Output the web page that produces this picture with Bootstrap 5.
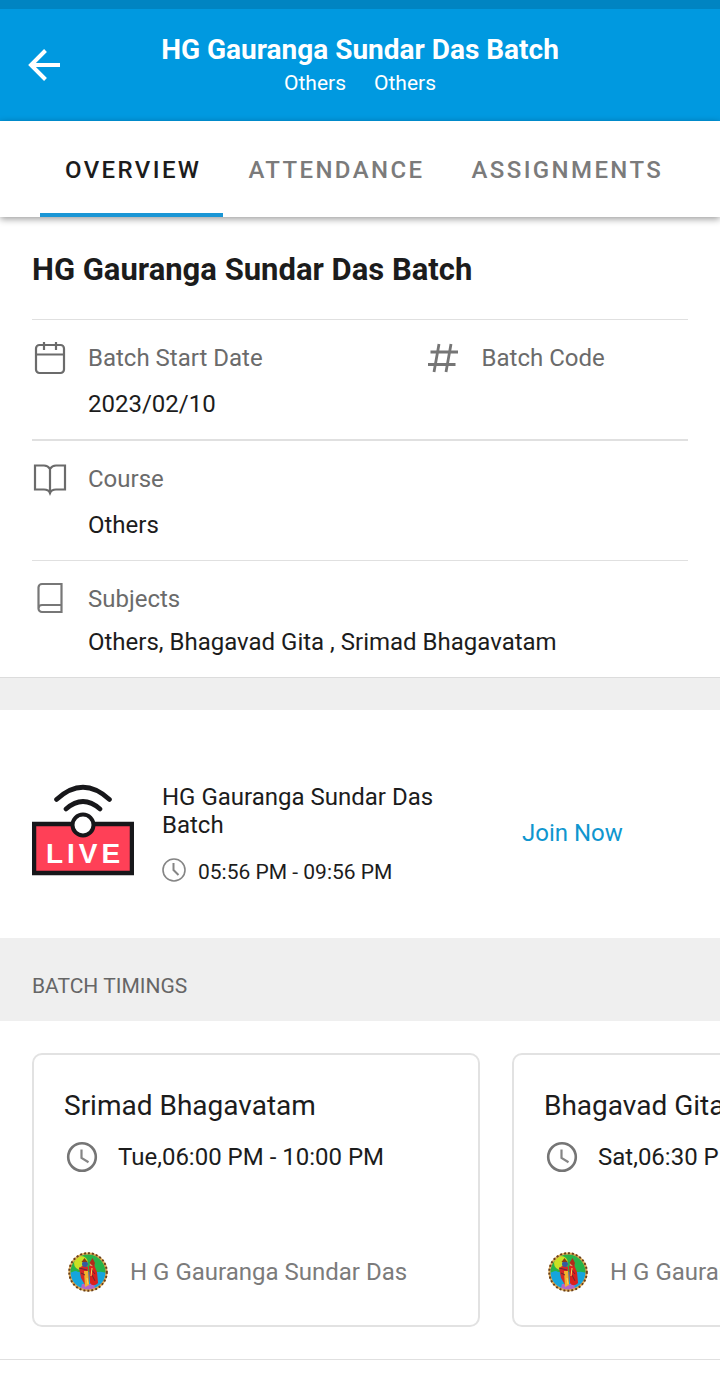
<!DOCTYPE html>
<html lang="en">
<head>
<meta charset="utf-8">
<meta name="viewport" content="width=device-width, initial-scale=1">
<title>HG Gauranga Sundar Das Batch</title>
<link href="https://cdn.jsdelivr.net/npm/bootstrap@5.3.0/dist/css/bootstrap.min.css" rel="stylesheet">
<style>
body { font-family: Roboto, sans-serif; font-size: 24px; line-height: 28px; color: #1c1c1c; background: #fff; }
svg { display: block; flex-shrink: 0; }
.app-header { background: #0099e0; border-top: 9px solid #0084c2; min-height: 121px; color: #fff; }
.back-btn { width: 88px; height: 112px; padding-left: 28px; }
.app-title { font-size: 28px; line-height: 34px; font-weight: 700; }
.app-sub { font-size: 21px; line-height: 32px; gap: 28px; }
.side-space { width: 88px; }
.tab-bar { height: 96px; padding-left: 40px; box-shadow: 0 2px 7px rgba(0,0,0,.4); position: relative; }
.tab-bar .nav-link { padding: 2px 22px 0 25px; height: 96px; line-height: 94px; font-weight: 500; letter-spacing: .1em; color: #7b7b7b; border-radius: 0; }
.tab-bar .nav-link.active { color: #1c1c1c; border-bottom: 4px solid #1a96d5; }
.gutter { padding-left: 32px; padding-right: 32px; }
.batch-name { font-size: 31px; line-height: 36px; font-weight: 700; padding: 35px 0 31px; margin: 0; }
.info-row { border-top: 1px solid #e0e0e0; padding: 24px 0 21px; }
.info-row.strong-line { border-top-width: 2px; }
.info-row dl { margin: 0; }
.info-row dt { font-weight: 400; color: #6b6b6b; margin-bottom: 18px; gap: 20px; height: 28px; }
.info-row dd { margin: 0; padding-left: 56px; min-height: 28px; }
.info-row.snug dt { margin-bottom: 15px; }
.first-col { width: 60%; }
.band { background: #efefef; }
.band-line { border-top: 1px solid #dcdcdc; height: 33px; }
.live-block { padding: 73px 32px 50px; gap: 28px; }
.live-text { width: 300px; }
.live-title { font-size: 24px; font-weight: 400; margin: 0 0 17px; line-height: 28px; }
.live-time { font-size: 21px; gap: 12px; line-height: 32px; }
.join-btn { color: #0f96cf; font-size: 24px; line-height: 28px; padding: 12px 8px; }
.join-btn:hover { color: #0b7fb0; }
.band-title { font-size: 21px; line-height: 28px; font-weight: 400; color: #666; margin: 0; padding-top: 34px; padding-bottom: 21px; }
.timings { padding: 32px; gap: 32px; border-bottom: 1px solid #e0e0e0; overflow-x: auto; scrollbar-width: none; }
.timings::-webkit-scrollbar { display: none; }
.slot-card { flex: 0 0 448px; border: 2px solid #e2e2e2; border-radius: 10px; padding: 33px 30px 29px; min-height: 274px; white-space: nowrap; }
.slot-title { font-size: 28px; line-height: 36px; font-weight: 400; margin: 0 0 17px; }
.slot-time { gap: 18px; line-height: 32px; }
.slot-host { gap: 18px; color: #7b7b7b; line-height: 48px; }
</style>
<script src="https://cdn.jsdelivr.net/npm/bootstrap@5.3.0/dist/js/bootstrap.bundle.min.js"></script>
</head>
<body>
<svg width="0" height="0" class="position-absolute" aria-hidden="true">
  <symbol id="clock" viewBox="0 0 36 32"><circle cx="18" cy="16" r="13.8" fill="none" stroke="#757575" stroke-width="2.6"/><path d="M17.500 8.500V17l7 4.200" fill="none" stroke="#858585" stroke-width="2.200"/></symbol>
  <symbol id="deity" viewBox="0 0 48 48">
    <clipPath id="disc"><circle cx="24" cy="24" r="18"/></clipPath>
    <circle cx="24" cy="24" r="18.600" fill="#16a5dc"/>
    <g clip-path="url(#disc)">
      <path d="M4 4h40v20c-3 2-5-1-9 0H14c-3-3-6 1-10 1z" fill="#27b34a"/>
      <circle cx="17" cy="15" r="7" fill="#cbe024"/>
      <path d="M16 44l2-8h12l2 8z" fill="#b467c9"/>
      <path d="M15 20l5-3 4 2 1 18h-4l-4-7z" fill="#d42a27"/>
      <path d="M20 23l4 0 1 14-4 2z" fill="#f2b52c"/>
      <path d="M25 18l5-1 3 7 1 11c-3 3-6 3-8 0z" fill="#da201d"/>
      <circle cx="21" cy="16" r="3" fill="#355b9d"/><path d="M17.500 14l3-4 3 4z" fill="#8a3b14"/>
      <circle cx="28" cy="16" r="2.300" fill="#dba06b"/><path d="M25.500 15l3-5 2.500 5-1 4z" fill="#b22a1a"/>
      <path d="M15 20l8 2M17 25l4 2M27 21l4 5M28 27l3 6" stroke="#622b36" fill="none"/>
      <path d="M28 20l-1 8M23 30l1 6" stroke="#ffdc58" fill="none"/>
    </g>
    <circle cx="24" cy="24" r="18.500" fill="none" stroke="#e2ad58" stroke-width="2"/>
    <circle cx="24" cy="24" r="18.800" fill="none" stroke="#68401c" stroke-width="2" stroke-dasharray="2 2"/>
  </symbol>
</svg>

<header class="app-header d-flex">
  <button type="button" class="btn back-btn border-0" aria-label="Back">
    <svg width="32" height="32" viewBox="0 0 32 32" fill="none" stroke="#fff" stroke-width="4"><path d="M32 16H3M17.500 1.500L3 16l14.500 14.500"/></svg>
  </button>
  <div class="flex-grow-1 text-center pt-4">
    <h1 class="app-title m-0 text-nowrap">HG Gauranga Sundar Das Batch</h1>
    <div class="app-sub d-flex justify-content-center"><span>Others</span><span>Others</span></div>
  </div>
  <div class="side-space"></div>
</header>

<nav class="tab-bar nav flex-nowrap bg-white" aria-label="Batch sections">
  <a class="nav-link active" aria-current="page" href="#overview">OVERVIEW</a>
  <a class="nav-link" href="#attendance">ATTENDANCE</a>
  <a class="nav-link" href="#assignments">ASSIGNMENTS</a>
</nav>

<main id="overview">
  <section class="gutter">
    <h2 class="batch-name">HG Gauranga Sundar Das Batch</h2>
    <div class="info-row d-flex">
      <dl class="first-col">
        <dt class="d-flex align-items-center">
          <svg width="36" height="36" viewBox="0 0 36 36" fill="none" stroke="#6b6b6b" stroke-width="2.200"><rect x="4" y="5" width="28" height="28" rx="3.500"/><path d="M4 14.500h28M12 2v8M24 2v8"/></svg>
          Batch Start Date</dt>
        <dd>2023/02/10</dd>
      </dl>
      <dl>
        <dt class="d-flex align-items-center">
          <svg width="36" height="36" viewBox="0 0 36 36" fill="none" stroke="#757575" stroke-width="2.800"><path d="M13 4L8 32M25 4l-5 28M4.500 12H32M2 24.500h27.500"/></svg>
          Batch Code</dt>
        <dd></dd>
      </dl>
    </div>
    <div class="info-row strong-line">
      <dl>
        <dt class="d-flex align-items-center">
          <svg width="36" height="36" viewBox="0 0 36 36" fill="none" stroke="#6b6b6b" stroke-width="2.200"><path d="M18 31V8c-1.500-2.500-3-3.500-6-3.500H3v24h9c3 0 5 1 6 3.500 1-2.500 3-3.500 6-3.500h9v-24h-9c-3 0-4.500 1-6 3.500"/></svg>
          Course</dt>
        <dd>Others</dd>
      </dl>
    </div>
    <div class="info-row snug">
      <dl>
        <dt class="d-flex align-items-center">
          <svg width="36" height="36" viewBox="0 0 36 36" fill="none" stroke="#777" stroke-width="2.200"><path d="M6.500 27.500V6.500a3.500 3.500 0 0 1 3.500-3.500h19.500v28H10a3.500 3.500 0 0 1 0-7h19.500"/></svg>
          Subjects</dt>
        <dd>Others, Bhagavad Gita , Srimad Bhagavatam</dd>
      </dl>
    </div>
  </section>

  <div class="band band-line"></div>

  <section class="live-block d-flex align-items-start">
    <svg width="102" height="94" viewBox="0 0 102 94" role="img" aria-label="Live">
      <g fill="none" stroke="#17171a" stroke-width="4.600" stroke-linecap="round"><path d="M24.500 16.500Q51-8 77.500 16.500M34 26q17-15 34 0"/></g>
      <rect x="2" y="41" width="98" height="49" fill="#ff4057" stroke="#17171a" stroke-width="4.500"/>
      <circle cx="51" cy="42" r="10.500" fill="#fff" stroke="#17171a" stroke-width="4"/>
      <text x="53" y="80" text-anchor="middle" font-family="Liberation Sans, sans-serif" font-size="28" font-weight="700" letter-spacing="4" fill="#fff">LIVE</text>
    </svg>
    <div class="live-text">
      <h3 class="live-title">HG Gauranga Sundar Das Batch</h3>
      <div class="live-time d-flex align-items-center">
        <svg width="24" height="28" viewBox="0 0 24 28" fill="none" stroke="#858585"><circle cx="12" cy="12" r="11" stroke-width="1.600"/><path d="M11.500 5v7l5 5" stroke-width="2"/></svg>
        <span>05:56 PM - 09:56 PM</span>
      </div>
    </div>
    <button type="button" class="btn join-btn border-0 mt-4 ms-4">Join Now</button>
  </section>

  <h3 class="band band-title gutter">BATCH TIMINGS</h3>

  <section class="timings d-flex">
    <article class="slot-card d-flex flex-column">
      <h4 class="slot-title">Srimad Bhagavatam</h4>
      <div class="slot-time d-flex"><svg width="36" height="32"><use href="#clock"/></svg><span>Tue,06:00 PM - 10:00 PM</span></div>
      <div class="slot-host d-flex mt-auto"><svg width="48" height="48"><use href="#deity"/></svg><span>H G Gauranga Sundar Das</span></div>
    </article>
    <article class="slot-card d-flex flex-column">
      <h4 class="slot-title">Bhagavad Gita</h4>
      <div class="slot-time d-flex"><svg width="36" height="32"><use href="#clock"/></svg><span>Sat,06:30 PM - 08:30 PM</span></div>
      <div class="slot-host d-flex mt-auto"><svg width="48" height="48"><use href="#deity"/></svg><span>H G Gauranga Sundar Das</span></div>
    </article>
  </section>
</main>
</body>
</html>
